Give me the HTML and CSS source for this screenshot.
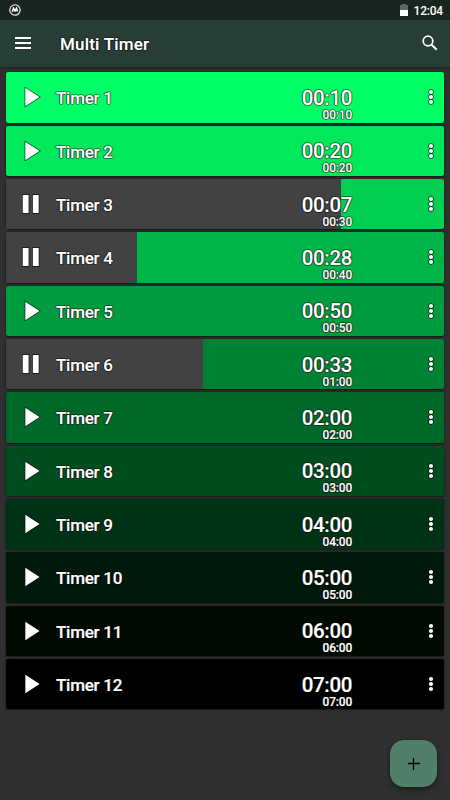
FILE: index.html
```html
<!DOCTYPE html>
<html lang="en">
<head>
  <meta charset="UTF-8">
  <meta name="viewport" content="width=device-width, initial-scale=1.0">
  <title>Multi Timer</title>
  <link rel="stylesheet" href="styles.css">
</head>
<body>
  <!-- Shared icons -->
  <svg class="icons" width="0" height="0">
    <symbol id="play" viewBox="0 0 20 20"><path d="M3.3 0.8 L17.6 10 L3.3 19.2 Z"/></symbol>
    <symbol id="pause" viewBox="0 0 20 20"><path d="M0.7 1 H6.6 V19 H0.7 Z M10.8 1 H16.7 V19 H10.8 Z"/></symbol>
    <symbol id="more" viewBox="0 0 6 16"><circle cx="3" cy="3" r="2.1"/><circle cx="3" cy="8" r="2.1"/><circle cx="3" cy="13" r="2.1"/></symbol>
  </svg>

  <div class="status-bar">
    <svg class="status-logo" width="12" height="12" viewBox="0 0 12 12">
      <path d="M10.8 8 A5.2 5.2 0 1 1 11.2 6 V6.6 Q11.1 7.5 10.2 7.4" fill="none" stroke="#e4e8e6" stroke-width="1.2"/>
      <path d="M3.2 7.8 L4.6 4.4 L6 6.8 L7.4 4.4 L8.6 7.4" fill="none" stroke="#fff" stroke-width="1.6"/>
    </svg>
    <svg class="battery" width="8" height="12" viewBox="0 0 8 12">
      <path d="M0 1 H2 V0 H6 V1 H8 V6 H0 Z" fill="#5d6864"/>
      <path d="M0 6 H8 V12 H0 Z" fill="#fff"/>
    </svg>
    <span class="clock">12:04</span>
  </div>

  <header class="app-bar">
    <svg class="menu" width="16" height="12" viewBox="0 0 16 12"><path d="M0 1 H16 M0 6 H16 M0 11 H16" stroke="#fff" stroke-width="1.9"/></svg>
    <h1>Multi Timer</h1>
    <svg class="search" width="16" height="16" viewBox="0 0 16 16">
      <circle cx="6" cy="6" r="4.8" fill="none" stroke="#fff" stroke-width="1.7"/>
      <path d="M9.4 9.4 L14.7 14.7" stroke="#fff" stroke-width="2.1"/>
    </svg>
  </header>

  <main class="timers">
    <div class="timer t1">
      <svg class="state"><use href="#play"/></svg>
      <div class="name">Timer 1</div>
      <div class="times"><div class="left">00:10</div><div class="total">00:10</div></div>
      <svg class="more"><use href="#more"/></svg>
    </div>
    <div class="timer t2">
      <svg class="state"><use href="#play"/></svg>
      <div class="name">Timer 2</div>
      <div class="times"><div class="left">00:20</div><div class="total">00:20</div></div>
      <svg class="more"><use href="#more"/></svg>
    </div>
    <div class="timer t3">
      <div class="elapsed" style="width: 76.5%"></div>
      <svg class="state"><use href="#pause"/></svg>
      <div class="name">Timer 3</div>
      <div class="times"><div class="left">00:07</div><div class="total">00:30</div></div>
      <svg class="more"><use href="#more"/></svg>
    </div>
    <div class="timer t4">
      <div class="elapsed" style="width: 29.9%"></div>
      <svg class="state"><use href="#pause"/></svg>
      <div class="name">Timer 4</div>
      <div class="times"><div class="left">00:28</div><div class="total">00:40</div></div>
      <svg class="more"><use href="#more"/></svg>
    </div>
    <div class="timer t5">
      <svg class="state"><use href="#play"/></svg>
      <div class="name">Timer 5</div>
      <div class="times"><div class="left">00:50</div><div class="total">00:50</div></div>
      <svg class="more"><use href="#more"/></svg>
    </div>
    <div class="timer t6">
      <div class="elapsed" style="width: 45%"></div>
      <svg class="state"><use href="#pause"/></svg>
      <div class="name">Timer 6</div>
      <div class="times"><div class="left">00:33</div><div class="total">01:00</div></div>
      <svg class="more"><use href="#more"/></svg>
    </div>
    <div class="timer t7">
      <svg class="state"><use href="#play"/></svg>
      <div class="name">Timer 7</div>
      <div class="times"><div class="left">02:00</div><div class="total">02:00</div></div>
      <svg class="more"><use href="#more"/></svg>
    </div>
    <div class="timer t8">
      <svg class="state"><use href="#play"/></svg>
      <div class="name">Timer 8</div>
      <div class="times"><div class="left">03:00</div><div class="total">03:00</div></div>
      <svg class="more"><use href="#more"/></svg>
    </div>
    <div class="timer t9">
      <svg class="state"><use href="#play"/></svg>
      <div class="name">Timer 9</div>
      <div class="times"><div class="left">04:00</div><div class="total">04:00</div></div>
      <svg class="more"><use href="#more"/></svg>
    </div>
    <div class="timer t10">
      <svg class="state"><use href="#play"/></svg>
      <div class="name">Timer 10</div>
      <div class="times"><div class="left">05:00</div><div class="total">05:00</div></div>
      <svg class="more"><use href="#more"/></svg>
    </div>
    <div class="timer t11">
      <svg class="state"><use href="#play"/></svg>
      <div class="name">Timer 11</div>
      <div class="times"><div class="left">06:00</div><div class="total">06:00</div></div>
      <svg class="more"><use href="#more"/></svg>
    </div>
    <div class="timer t12">
      <svg class="state"><use href="#play"/></svg>
      <div class="name">Timer 12</div>
      <div class="times"><div class="left">07:00</div><div class="total">07:00</div></div>
      <svg class="more"><use href="#more"/></svg>
    </div>
  </main>

  <button class="add" aria-label="Add timer">
    <svg width="12" height="12" viewBox="0 0 12 12"><path d="M5.5 0 V12 M0 5.5 H12" stroke="#000" stroke-width="1.3"/></svg>
  </button>
</body>
</html>
```

FILE: styles.css
```css
* {
  box-sizing: border-box;
}
body {
  margin: 0;
  height: 800px;
  overflow: hidden;
  background-color: #303030;
  color: #fff;
  font-family: Roboto, sans-serif;
  font-weight: 500;
}
.icons {
  position: absolute;
}
.status-bar {
  display: flex;
  align-items: center;
  height: 20px;
  padding: 0 7px 0 9px;
  background-color: #192520;
}
.battery {
  margin-left: auto;
  margin-right: 6px;
}
.clock {
  font-size: 12px;
  line-height: 20px;
  letter-spacing: -0.2px;
  padding-top: 1px;
}
.app-bar {
  display: flex;
  align-items: center;
  height: 47px;
  padding: 0 12px 1px 15px;
  background-color: #283e35;
  box-shadow: 0 1px 2px rgba(0, 0, 0, 0.35);
}
.app-bar h1 {
  flex: 1;
  margin: 0 0 0 29px;
  font-size: 17px;
  font-weight: 500;
  letter-spacing: 0.2px;
  padding-top: 2px;
}
.timers {
  display: flex;
  flex-direction: column;
  gap: 3px;
  padding: 5.3px 6px 0;
}
.timer {
  position: relative;
  display: flex;
  align-items: center;
  height: 50.33px;
  padding: 0 10px 0 16px;
  border-radius: 2px;
  overflow: hidden;
  box-shadow: 0 0 1px rgba(0, 0, 0, 0.7), 0 1px 2px rgba(0, 0, 0, 0.5);
}
/* part of the row already counted down */
.elapsed {
  position: absolute;
  top: 0;
  left: 0;
  bottom: 0;
  background-color: #424242;
}
.state {
  position: relative;
  width: 20px;
  height: 20px;
  fill: #fff;
  stroke: rgba(0, 0, 0, 0.75);
  stroke-width: 1.4px;
  paint-order: stroke;
  overflow: visible;
}
.name {
  position: relative;
  flex: 1;
  margin-left: 14px;
  font-size: 17px;
  letter-spacing: -0.25px;
  line-height: 20px;
  padding-top: 2px;
}
.times {
  position: relative;
  margin-right: 76px;
  padding-top: 13.4px;
  text-align: right;
}
.left {
  font-size: 20.5px;
  letter-spacing: -0.35px;
  line-height: 22px;
}
.total {
  font-size: 11.9px;
  letter-spacing: -0.15px;
  line-height: 12px;
}
.name, .left, .total, .app-bar h1 {
  -webkit-text-stroke: 0.2px #fff;
  text-shadow: 0 0 1px #000, 0 0 1px #000, 0 0 1px #000, 0 0 1px #000, 0 0 1px #000;
}
.more {
  position: relative;
  width: 6px;
  height: 16px;
  fill: #fff;
  stroke: rgba(0, 0, 0, 0.7);
  stroke-width: 1.4px;
  paint-order: stroke;
}
.t1 { background-color: #00ff66; }
.t2 { background-color: #00e85c; }
.t3 { background-color: #00cf53; }
.t4 { background-color: #00b548; }
.t5 { background-color: #009b3e; }
.t6 { background-color: #008234; }
.t7 { background-color: #006829; }
.t8 { background-color: #004d1f; }
.t9 { background-color: #003315; }
.t10 { background-color: #00190a; }
.t11 { background-color: #000a00; }
.t12 { background-color: #000; }
.add {
  position: fixed;
  right: 13px;
  bottom: 13px;
  display: flex;
  align-items: center;
  justify-content: center;
  width: 47px;
  height: 47px;
  padding: 0;
  border: none;
  border-radius: 14px;
  background-color: #50806a;
  box-shadow: 0 0 1px #000, 0 3px 6px rgba(0, 0, 0, 0.4);
}
```
